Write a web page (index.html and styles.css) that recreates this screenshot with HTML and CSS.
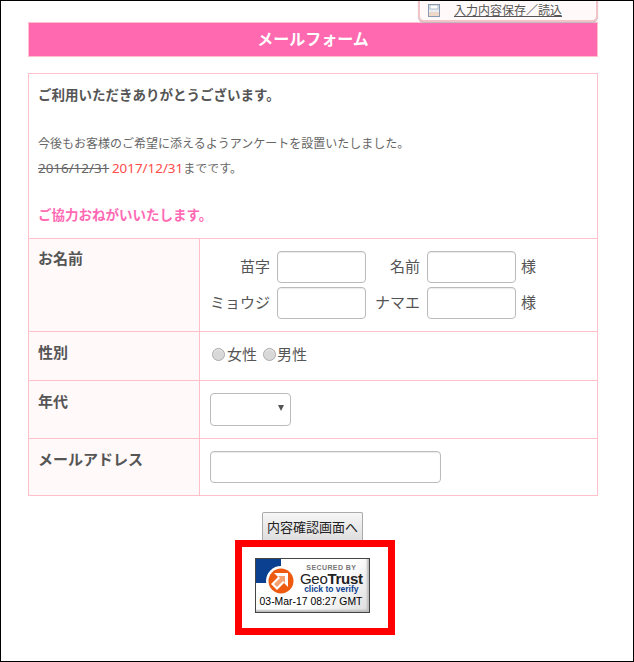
FILE: index.html
```html
<!DOCTYPE html>
<html lang="ja">
<head>
<meta charset="utf-8">
<title>メールフォーム</title>
<link rel="stylesheet" href="styles.css">
</head>
<body>
<div class="frame">
  <main class="page">
    <div class="save-tab">
      <svg class="save-icon" width="12" height="13" viewBox="0 0 12 13"><rect x="0.5" y="0.5" width="11" height="12" fill="#e8eef4" stroke="#8a9bb0"/><rect x="2" y="1" width="8" height="4" fill="#fff" stroke="#8a9bb0" stroke-width="0.6"/><rect x="1" y="8" width="10" height="4" fill="#f0d8c8"/></svg>
      <a class="save-link" href="#">入力内容保存／読込</a>
    </div>
    <h1 class="title">メールフォーム</h1>
    <form class="form">
      <section class="intro">
        <p class="thanks">ご利用いただきありがとうございます。</p>
        <p class="lead">今後もお客様のご希望に添えるようアンケートを設置いたしました。</p>
        <p class="period"><s class="num">2016/12/31</s> <span class="num date">2017/12/31</span>までです。</p>
        <p class="please">ご協力おねがいいたします。</p>
      </section>
      <div class="row row-name">
        <div class="label">お名前</div>
        <div class="field name-grid">
          <span class="nm">苗字</span><input class="text short"><span class="nm">名前</span><input class="text short"><span class="sama">様</span>
          <span class="nm">ミョウジ</span><input class="text short"><span class="nm">ナマエ</span><input class="text short"><span class="sama">様</span>
        </div>
      </div>
      <div class="row row-gender">
        <div class="label">性別</div>
        <div class="field radios">
          <span class="radio"></span><span class="rtext">女性</span>
          <span class="radio second"></span><span class="rtext">男性</span>
        </div>
      </div>
      <div class="row row-age">
        <div class="label">年代</div>
        <div class="field"><div class="select"><span class="arrow"></span></div></div>
      </div>
      <div class="row row-mail">
        <div class="label">メールアドレス</div>
        <div class="field"><input class="text mail"></div>
      </div>
      <div class="actions">
        <button class="confirm" type="button">内容確認画面へ</button>
      </div>
      <div class="seal-wrap">
        <div class="seal">
          <div class="seal-top">
            <svg class="seal-logo" width="44" height="36" viewBox="0 0 44 36">
              <rect x="0" y="0" width="25" height="24" fill="#0b3f8f"/>
              <circle cx="25" cy="22" r="15" fill="#fff"/>
              <circle cx="25" cy="22" r="12.5" fill="#ee5a10"/>
              <path d="M18 14H32V28L28 24L21 31L15 25L22 18Z" fill="#fff"/>
              <path d="M22 17H29V24L27 22L21 28L18 25L24 19Z" fill="#f6a070"/>
            </svg>
            <div class="seal-text">
              <div class="secured">SECURED BY</div>
              <div class="geo">Geo<b>Trust</b></div>
              <div class="click">click to verify</div>
            </div>
          </div>
          <div class="stamp">03-Mar-17 08:27 GMT</div>
        </div>
      </div>
    </form>
  </main>
</div>
</body>
</html>
```
FILE: styles.css
```css
* { box-sizing: border-box; }
html, body { margin: 0; padding: 0; background: #fff; }
body {
  font-family: "Noto Sans CJK JP", "Noto Sans", sans-serif;
  color: #555;
  font-size: 14px;
}
.frame {
  width: 634px;
  height: 662px;
  border: 1px solid #000;
  overflow: hidden;
  padding: 21px 35px 0 27px;
}
.page { position: relative; width: 570px; }
.save-tab {
  position: absolute;
  right: 0;
  top: -26px;
  width: 180px;
  height: 26px;
  background: #fff9f9;
  border: 2px solid #f0c4c8;
  border-top: 0;
  border-radius: 0 0 6px 6px;
  box-shadow: 0 1px 1px #bbb;
  display: flex;
  align-items: flex-end;
  padding: 0 0 3px 8px;
  font-size: 12px;
  line-height: 14px;
}
.save-icon { margin-right: 14px; flex: none; }
.save-link { color: #555; text-decoration: underline; white-space: nowrap; }
.title {
  margin: 0;
  height: 35px;
  background: #ff69b0;
  border: 1px solid #ffc0cb;
  color: #fff;
  font-size: 16px;
  font-weight: 700;
  line-height: 30px;
  text-align: center;
}
.form { margin-top: 16px; }
.intro {
  height: 166px;
  border: 1px solid #ffc0cb;
  padding: 0 9px;
}
.intro p { margin: 0; white-space: nowrap; }
.thanks { font-size: 13.5px; font-weight: 700; line-height: 20px; padding-top: 10px; color: #555; }
.lead { font-size: 12px; line-height: 20px; padding-top: 29px; color: #666; }
.period { font-size: 12px; line-height: 20px; padding-top: 5px; color: #666; }
.num { font-family: "Noto Sans", sans-serif; font-size: 13.4px; }
.date { color: #ff4a4a; }
.please { font-size: 13.5px; font-weight: 700; line-height: 20px; padding-top: 26px; color: #ff69b4; }
.row {
  display: flex;
  border: 1px solid #ffc0cb;
  border-top: 0;
}
.row-name { height: 93px; }
.row-gender { height: 49px; }
.row-age { height: 58px; }
.row-mail { height: 57px; }
.label {
  width: 171px;
  flex: none;
  background: #fff9f9;
  border-right: 1px solid #ffc0cb;
  padding: 10px 9px 0;
  font-weight: 700;
  font-size: 15px;
  line-height: 20px;
}
.row-name .label { padding-top: 9px; }
.field { flex: 1; padding-left: 10px; font-size: 15px; }
.name-grid {
  padding-top: 12px;
  display: grid;
  grid-template-columns: 67px 89px 61px 89px auto;
  grid-auto-rows: 32px;
  row-gap: 4px;
  align-items: center;
  justify-content: start;
}
.nm { text-align: right; padding: 0 7px 3px 0; line-height: 29px; white-space: nowrap; }
.sama { padding: 0 0 3px 5px; line-height: 29px; }
.text {
  display: block;
  height: 32px;
  border: 1px solid #bbb;
  border-radius: 4px;
  background: #fff;
  box-shadow: inset 0 1px 1px rgba(0,0,0,.08);
  padding: 0;
}
.short { width: 89px; }
.mail { width: 231px; margin-top: 12px; }
.radios { display: flex; align-items: center; padding: 0 0 4px 12px; }
.radio {
  width: 13px;
  height: 13px;
  border-radius: 50%;
  background: #d8d8d8;
  border: 1px solid #aaa;
  box-shadow: inset 0 1px 1px #eee;
  margin-right: 2px;
}
.radio.second { margin-left: 6px; margin-right: 1px; }
.rtext { line-height: 20px; }
.select {
  position: relative;
  width: 81px;
  height: 33px;
  margin-top: 12px;
  border: 1px solid #bbb;
  border-radius: 4px;
  background: #fff;
}
.arrow {
  position: absolute;
  right: 6px;
  top: 11px;
  border: 3px solid transparent;
  border-top: 6px solid #555;
  border-bottom: 0;
}
.actions { display: flex; padding: 16px 0 0 234px; }
.confirm {
  width: 101px;
  height: 28px;
  padding: 0;
  border: 1px solid #aaa;
  border-bottom: 0;
  border-radius: 2px 2px 0 0;
  background: linear-gradient(#f6f6f6, #dedede);
  font-family: "Noto Sans CJK JP", sans-serif;
  font-size: 13px;
  color: #222;
  white-space: nowrap;
}
.seal-wrap {
  width: 160px;
  height: 95px;
  margin-left: 207px;
  border: 7px solid #f00;
  padding: 11px 0 0 13px;
}
.seal {
  width: 115px;
  height: 55px;
  border: 1px solid #444;
  background: linear-gradient(135deg, #fff 60%, #ddd);
  box-shadow: inset -2px -2px 2px #bbb;
  overflow: hidden;
  font-family: "Liberation Sans", Arial, sans-serif;
}
.seal-top { display: flex; height: 36px; }
.seal-logo { flex: none; width: 44px; height: 36px; }
.seal-text { flex: 1; padding-right: 7px; text-align: center; }
.secured { font-size: 7px; font-weight: 700; color: #777; line-height: 9px; padding-top: 4px; letter-spacing: .4px; white-space: nowrap; }
.geo { font-size: 15px; color: #222; line-height: 13px; letter-spacing: -.3px; white-space: nowrap; }
.geo b { font-weight: 700; }
.click { font-size: 8.5px; font-weight: 700; color: #0b3f8f; line-height: 9px; white-space: nowrap; }
.stamp { font-size: 10.4px; color: #000; line-height: 14px; padding-right: 3px; text-align: center; white-space: nowrap; }
```
